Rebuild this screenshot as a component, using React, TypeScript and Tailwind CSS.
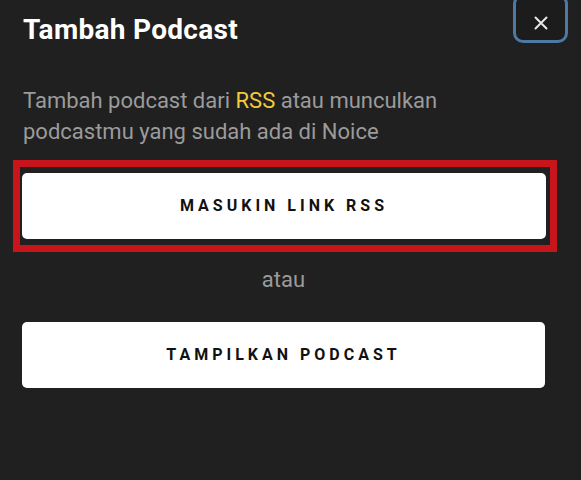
import React from "react";

const CloseIcon = () => (
  <svg width="14" height="14" viewBox="0 0 14 14" fill="none" stroke="#e8e8e8" strokeWidth="2" strokeLinecap="round">
    <path d="M1.5 1.5 L12.5 12.5 M12.5 1.5 L1.5 12.5" />
  </svg>
);

export default function App() {
  return (
    <div className="relative w-[581px] h-[480px] overflow-hidden bg-[#202020] font-['Roboto','Liberation_Sans',sans-serif]">
      <button
        aria-label="Tutup"
        className="absolute left-[513px] top-[-6px] w-[55px] h-[49px] rounded-[10px] border-[3px] border-[#4e79a5] bg-[#1c1c1c] flex items-center justify-center pt-[9px]"
      >
        <CloseIcon />
      </button>

      <div className="pl-[22px] pr-[36px] pt-[12px]">
        <h1 className="text-[28px] leading-[36px] font-bold text-white pl-px tracking-[0.3px]">Tambah Podcast</h1>

        <p className="mt-[37px] text-[22px] leading-[31px] text-[#9b9b9b] pl-px">
          Tambah podcast dari <span className="text-[#f2cb3c]">RSS</span> atau munculkan
          <br />
          podcastmu yang sudah ada di Noice
        </p>

        <div className="mt-[13px] -ml-[9px] -mr-[12px] border-[7px] border-[#c8141b] pl-[2px] pr-[4px] py-[6px]">
          <button className="w-full h-[66px] rounded-[5px] bg-white text-[#111111] text-[16px] font-bold tracking-[4px]">
            MASUKIN LINK RSS
          </button>
        </div>

        <p className="mt-[12px] text-center text-[22px] leading-[31px] text-[#9b9b9b]">atau</p>

        <button className="mt-[27px] w-full h-[66px] rounded-[5px] bg-white text-[#111111] text-[16px] font-bold tracking-[4px]">
          TAMPILKAN PODCAST
        </button>
      </div>
    </div>
  );
}
